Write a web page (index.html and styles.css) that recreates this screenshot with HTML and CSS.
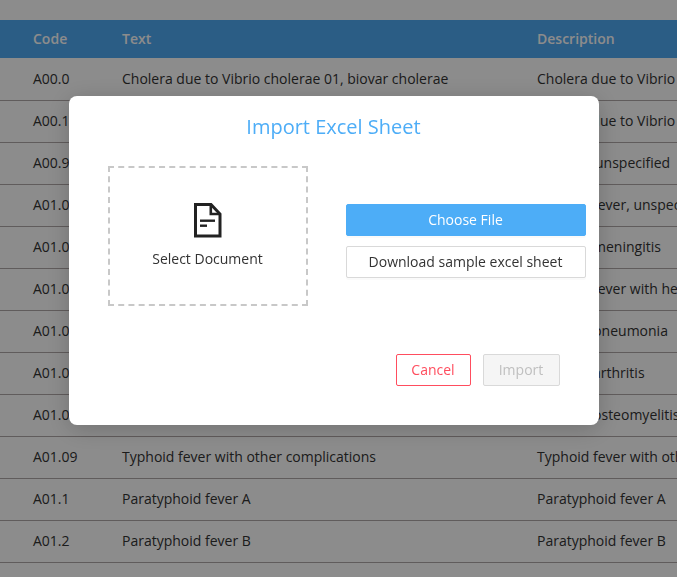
FILE: index.html
```html
<!DOCTYPE html>
<html lang="en">
<head>
<meta charset="utf-8">
<title>Import Excel Sheet</title>
<link rel="stylesheet" href="styles.css">
</head>
<body>
<div class="page">
  <div class="row head"><span>Code</span><span>Text</span><span>Description</span></div>
  <div class="row"><span>A00.0</span><span>Cholera due to Vibrio cholerae 01, biovar cholerae</span><span>Cholera due to Vibrio cholerae 01, biovar cholerae</span></div>
  <div class="row"><span>A00.1</span><span>Cholera due to Vibrio cholerae 01, biovar eltor</span><span>Cholera due to Vibrio cholerae 01, biovar eltor</span></div>
  <div class="row"><span>A00.9</span><span>Cholera, unspecified</span><span>Cholera, unspecified</span></div>
  <div class="row"><span>A01.00</span><span>Typhoid fever, unspecified</span><span>Typhoid fever, unspecified</span></div>
  <div class="row"><span>A01.01</span><span>Typhoid meningitis</span><span>Typhoid meningitis</span></div>
  <div class="row"><span>A01.02</span><span>Typhoid fever with heart involvement</span><span>Typhoid fever with heart involvement</span></div>
  <div class="row"><span>A01.03</span><span>Typhoid pneumonia</span><span>Typhoid pneumonia</span></div>
  <div class="row"><span>A01.04</span><span>Typhoid arthritis</span><span>Typhoid arthritis</span></div>
  <div class="row"><span>A01.05</span><span>Typhoid osteomyelitis</span><span>Typhoid osteomyelitis</span></div>
  <div class="row"><span>A01.09</span><span>Typhoid fever with other complications</span><span>Typhoid fever with other complications</span></div>
  <div class="row"><span>A01.1</span><span>Paratyphoid fever A</span><span>Paratyphoid fever A</span></div>
  <div class="row"><span>A01.2</span><span>Paratyphoid fever B</span><span>Paratyphoid fever B</span></div>
</div>
<div class="overlay">
  <div class="modal">
    <h2 class="title">Import Excel Sheet</h2>
    <div class="main">
      <div class="drop">
        <svg class="doc" width="28" height="35" viewBox="0 0 28 35" fill="none" stroke="#222" stroke-width="3" aria-hidden="true">
          <path d="M1.5 1.5H17L26 11V33H1.5Z"/>
          <path d="M16.8 1.5V11H26" stroke-width="2.6"/>
          <path d="M6 17.7H21" stroke-width="2.4"/>
          <path d="M6 22.7H13" stroke-width="2.4"/>
        </svg>
        <span class="drop-label">Select Document</span>
      </div>
      <div class="actions">
        <button class="btn primary">Choose File</button>
        <button class="btn outline">Download sample excel sheet</button>
      </div>
    </div>
    <div class="footer">
      <button class="btn cancel">Cancel</button>
      <button class="btn disabled">Import</button>
    </div>
  </div>
</div>
</body>
</html>
```
FILE: styles.css
```css
* { box-sizing: border-box; }
html, body { margin: 0; height: 100%; overflow: hidden; background: #fff; }
body { font-family: "Open Sans", sans-serif; font-size: 14px; color: #333; }
.page { padding-top: 20px; }
.row {
  display: grid;
  grid-template-columns: 89px 415px 600px;
  align-items: center;
  height: 42px;
  padding: 0 0 2px 33px;
  border-top: 1px solid #b0a8a8;
  white-space: nowrap;
}
.row:last-child { height: 43px; border-bottom: 1px solid #b0a8a8; }
.head {
  height: 38px;
  background: #4fa9f2;
  color: #fff;
  font-weight: 600;
  border-top: 0;
}
.head + .row { border-top-color: transparent; }
.overlay {
  position: fixed;
  inset: 0;
  background: rgba(0, 0, 0, 0.45);
  padding: 96px 0 0 69px;
}
.modal {
  width: 530px;
  height: 329px;
  background: #fff;
  border-radius: 8px;
  box-shadow: 0 4px 24px rgba(0, 0, 0, 0.2);
  padding: 17px 13px 39px 39px;
  display: flex;
  flex-direction: column;
}
.title {
  margin: 0 -12px 25px -39px;
  font-size: 20px;
  font-weight: 400;
  line-height: 28px;
  color: #4dadf7;
  text-align: center;
}
.main { display: flex; align-items: flex-start; gap: 38px; }
.drop {
  width: 200px;
  height: 140px;
  border: 2px dashed #c8c8c8;
  display: flex;
  flex-direction: column;
  align-items: center;
  padding-top: 35px;
  color: #333;
}
.doc { display: block; margin-bottom: 11px; }
.drop-label { line-height: 20px; margin-right: 1px; }
.actions { display: flex; flex-direction: column; gap: 10px; width: 240px; margin-top: 38px; }
.btn {
  font-family: inherit;
  font-size: 14px;
  height: 32px;
  border-radius: 2px;
  padding: 0 1px 2px 0;
  background: #fff;
  color: #333;
  border: 1px solid #d9d9d9;
}
.primary {
  background: #4dadf7;
  border-color: #4dadf7;
  color: #fff;
  box-shadow: 0 2px 0 rgba(0, 0, 0, 0.02);
}
.outline { box-shadow: 0 2px 0 rgba(0, 0, 0, 0.02); }
.footer {
  margin-top: auto;
  display: flex;
  justify-content: flex-end;
  gap: 12px;
  padding-right: 26px;
}
.cancel { width: 75px; border-color: #ff4d5e; color: #ff4d5e; }
.disabled { width: 77px; background: #f5f5f5; color: #bfbfbf; }
```
